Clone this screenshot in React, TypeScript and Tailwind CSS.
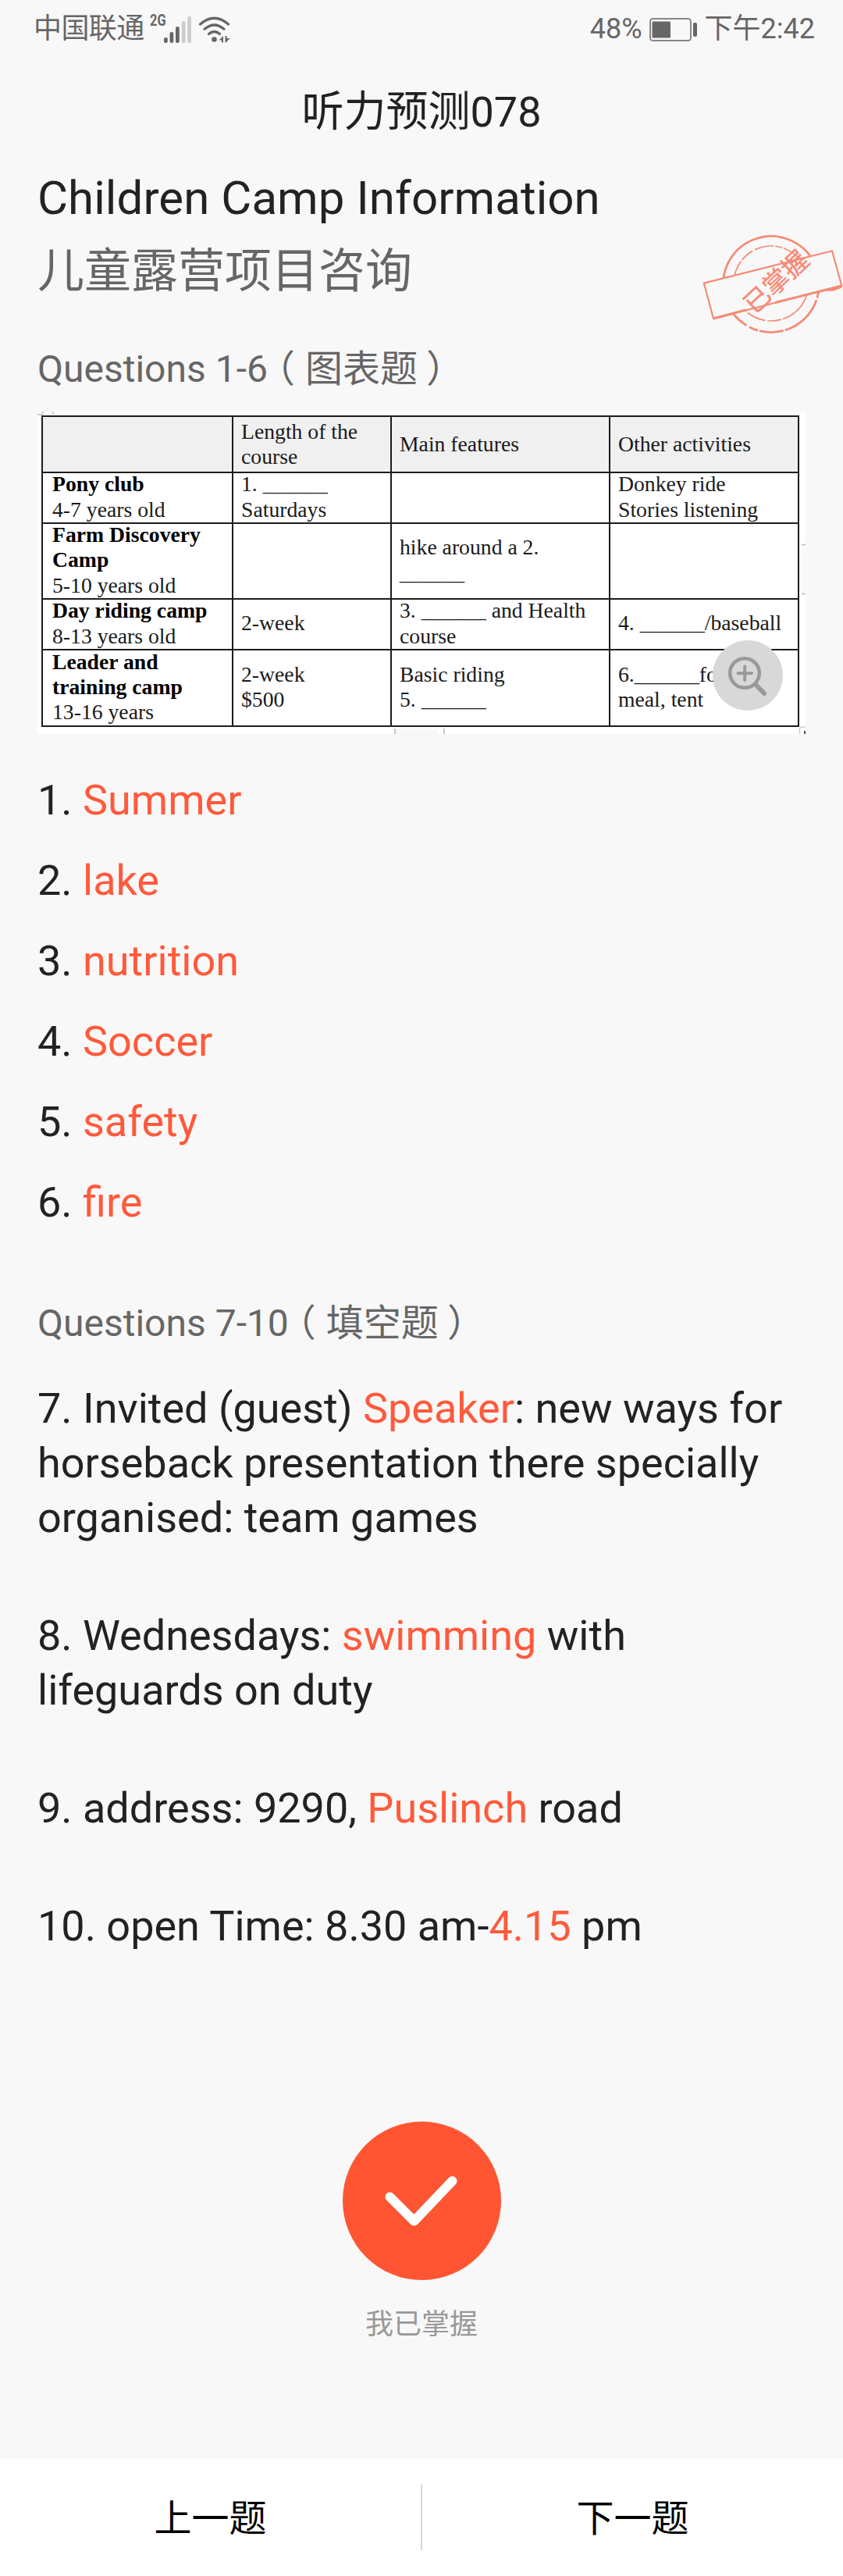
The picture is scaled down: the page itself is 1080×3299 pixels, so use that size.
import type { ReactNode } from 'react';

const SANS = "font-['Roboto','Noto_Sans_CJK_SC',sans-serif]";

const ANSWERS = ['Summer', 'lake', 'nutrition', 'Soccer', 'safety', 'fire'];

const BLANK = '______';

type Row = { name: string[]; age: string; cells: string[][] };

const ROWS: Row[] = [
  {
    name: ['Pony club'],
    age: '4-7 years old',
    cells: [[`1. ${BLANK}`, 'Saturdays'], [], ['Donkey ride', 'Stories listening']],
  },
  {
    name: ['Farm Discovery', 'Camp'],
    age: '5-10 years old',
    cells: [[], ['hike around a 2.', BLANK], []],
  },
  {
    name: ['Day riding camp'],
    age: '8-13 years old',
    cells: [['2-week'], [`3. ${BLANK} and Health`, 'course'], [`4. ${BLANK}/baseball`]],
  },
  {
    name: ['Leader and', 'training camp'],
    age: '13-16 years',
    cells: [['2-week', '$500'], ['Basic riding', `5. ${BLANK}`], [`6.${BLANK}for a`, 'meal, tent']],
  },
];

function SignalIcon() {
  return (
    <svg className="h-[34px] w-[36px]" viewBox="0 0 36 34" aria-hidden="true">
      <rect x="0" y="27" width="4.8" height="7" rx="2.2" fill="#666" />
      <rect x="7.5" y="20" width="4.8" height="14" rx="2.2" fill="#666" />
      <rect x="15" y="13" width="4.8" height="21" rx="2.2" fill="#666" />
      <rect x="22.8" y="6" width="4.8" height="28" rx="2.2" fill="#ccc" />
      <rect x="30.2" y="0" width="4.8" height="34" rx="2.2" fill="#ccc" />
    </svg>
  );
}

function WifiIcon() {
  return (
    <svg className="ml-2 h-[34px] w-[42px]" viewBox="0 0 42 34" aria-hidden="true">
      <g fill="none" stroke="#666" strokeWidth="3.2" strokeLinecap="round">
        <path d="M2.5 10Q20.5 -5.5 38.5 10" />
        <path d="M8 16.2Q20.5 5.8 33 16.2" />
        <path d="M13.5 22.5Q20.5 16.5 27.5 22.5" />
      </g>
      <circle cx="20.5" cy="29.5" r="3.3" fill="#666" />
      <path d="M26.5 30.5L32 25V33.5H30V30.5ZM34.5 25L36.5 25V28L40.5 28L35.5 33.5H34.5Z" fill="#666" />
    </svg>
  );
}

function BatteryIcon() {
  return (
    <svg className="ml-[9px] mr-[10px] h-[30px] w-[61px]" viewBox="0 0 61 30" aria-hidden="true">
      <rect x="1" y="1" width="52" height="28" rx="3.5" fill="none" stroke="#888" strokeWidth="2" />
      <rect x="3.5" y="4.5" width="23.5" height="21" rx="1" fill="#666" />
      <rect x="56" y="6" width="5" height="18" rx="2" fill="#666" />
    </svg>
  );
}

function StatusBar() {
  return (
    <div className="flex h-[75px] items-center pl-[43px] pr-[36px] text-[36px] leading-[75px] text-[#666]">
      <span className="tracking-[-0.6px]">中国联通</span>
      <span className="ml-[7px] mb-[22px] w-[18px] origin-left scale-x-[0.78] text-[21px] font-bold leading-none">2G</span>
      <SignalIcon />
      <WifiIcon />
      <span className="ml-auto">48%</span>
      <BatteryIcon />
      <span>下午2:42</span>
    </div>
  );
}

function Stamp() {
  return (
    <svg
      className="absolute left-[896px] top-[296px] h-[136px] w-[184px]"
      viewBox="36 16 184 136"
      role="img"
      aria-label="已掌握"
    >
      <g fill="none" stroke="#f58b77">
        <circle cx="128" cy="84" r="61.5" strokeWidth="2.8" strokeDasharray="232 3 58 2 31 2 12 4 60" transform="rotate(160 128 84)" />
        <circle cx="128" cy="83" r="48" strokeWidth="1.7" strokeDasharray="60 2 18 3 25 2 9 2" />
        <path d="M41.8 82.6L206 41.3L218.3 86L54 128Z" fill="#f8f8f8" strokeWidth="2.2" />
        <path d="M54 128L95 117M133 107.5L218.3 86M196 91.5L208 91L218.3 87" strokeWidth="3" />
      </g>
      <text
        x="134.5"
        y="81"
        transform="rotate(-43 134.5 81)"
        textAnchor="middle"
        dominantBaseline="central"
        fontSize="33"
        fill="#f58b77"
        stroke="#f58b77"
        strokeWidth="0.4"
      >
        已掌握
      </text>
    </svg>
  );
}

function SectionTitle({ label, kind }: { label: string; kind: string }) {
  return (
    <h3 className="h-[70px] text-[48px] leading-[70px] text-[#666]">
      {label}
      <span className="-ml-[13px] mr-[13px]">（</span>
      {kind}
      <span className="ml-[11px]">）</span>
    </h3>
  );
}

function Cell({ children, head, first }: { children?: ReactNode; head?: boolean; first?: boolean }) {
  return (
    <div
      className={`flex flex-col justify-center whitespace-nowrap ${head ? 'bg-[#f0f0f0]' : 'bg-white pb-[2px]'} ${first ? 'pl-3' : 'pl-2.5'}`}
    >
      {children}
    </div>
  );
}

function CampTable() {
  return (
    <div className="relative mt-[19px] h-[413px] w-[984px] bg-white pl-[5px] pt-[5px]">
      <div className="grid w-[971px] grid-cols-[242px_201px_278px_240px] grid-rows-[70px_63px_95px_63px_96px] gap-[2px] bg-[#1c1c1c] p-[2px] font-['Liberation_Serif',serif] text-[27.7px] leading-[32.3px] text-[#1a1a1a]">
        <Cell head first />
        <Cell head>
          <span>Length of the</span>
          <span>course</span>
        </Cell>
        <Cell head>Main features</Cell>
        <Cell head>Other activities</Cell>
        {ROWS.map((row) => (
          <div key={row.age} className="contents">
            <Cell first>
              {row.name.map((line) => (
                <b key={line} className="font-bold text-black">{line}</b>
              ))}
              <span>{row.age}</span>
            </Cell>
            {row.cells.map((lines, i) => (
              <Cell key={i}>
                {lines.map((line) => (
                  <span key={line}>{line}</span>
                ))}
              </Cell>
            ))}
          </div>
        ))}
      </div>

      {/* page marks left around the scanned sheet */}
      <svg className="absolute inset-0 h-full w-full" viewBox="0 0 984 413" aria-hidden="true">
        <path d="M979 171h5v62h-5ZM459 406h54v7h-54Z" fill="#f8f8f8" />
        <path
          d="M0 4h5q2 0 2-4M20 0v3M979 170.5h5M979 233.5h5M458 406v7M521 406v7"
          fill="none"
          stroke="#bbb"
          strokeWidth="1.6"
        />
        <path d="M976.5 413v-6q0-3 3-3h4.5" fill="none" stroke="#ccc" strokeWidth="1.5" />
        <path d="M983 409v4" stroke="#555" strokeWidth="2" />
      </svg>

      <button
        type="button"
        aria-label="放大图片"
        className="absolute left-[865px] top-[293px] h-[90px] w-[90px] rounded-full bg-[#d8d8d8]"
      >
        <svg className="h-full w-full" viewBox="0 0 90 90" fill="none" stroke="#999" strokeLinecap="round">
          <circle cx="41" cy="42" r="18.8" strokeWidth="4.5" />
          <path d="M32.5 42.2h17.5M41.2 33.5v17.5" strokeWidth="4" />
          <path d="M55.5 57L66 68" strokeWidth="6" />
        </svg>
      </button>
    </div>
  );
}

function Hit({ children }: { children: ReactNode }) {
  return <span className="text-[#ff5a3c]">{children}</span>;
}

export default function App() {
  return (
    <div className={`relative flex h-[3299px] w-[1080px] flex-col overflow-hidden bg-[#f8f8f8] text-[#222] ${SANS}`}>
      <StatusBar />
      <header className="h-[132px] text-center text-[54px] leading-[137px]">听力预测078</header>
      <Stamp />

      <main className="px-12">
        <h1 className="text-[60px] leading-[94px] tracking-[0.06px]">Children Camp Information</h1>
        <h2 className="h-[94px] text-[60px] leading-[94px] text-[#666]">儿童露营项目咨询</h2>

        <div className="mt-[43px]">
          <SectionTitle label="Questions 1-6" kind="图表题" />
        </div>
        <CampTable />

        <ol className="mt-[33px] text-[54px] leading-[103px]">
          {ANSWERS.map((answer, i) => (
            <li key={answer}>
              {i + 1}. <Hit>{answer}</Hit>
            </li>
          ))}
        </ol>

        <div className="mt-[69px]">
          <SectionTitle label="Questions 7-10" kind="填空题" />
        </div>
        <div className="mt-[39px] flex flex-col gap-[81px] text-[54px] leading-[70px]">
          <p>
            7. Invited (guest) <Hit>Speaker</Hit>: new ways for horseback presentation there specially organised: team games
          </p>
          <p>
            8. Wednesdays: <Hit>swimming</Hit> with lifeguards on duty
          </p>
          <p>
            9. address: 9290, <Hit>Puslinch</Hit> road
          </p>
          <p>
            10. open Time: 8.30 am-<Hit>4.15</Hit> pm
          </p>
        </div>
      </main>

      <div className="mt-[215px] flex flex-col items-center">
        <button type="button" aria-label="我已掌握" className="h-[203px] w-[203px] rounded-full bg-[#ff5533]">
          <svg className="h-full w-full" viewBox="0 0 203 203" fill="none" aria-hidden="true">
            <path
              d="M60.5 96.5L91.5 127.5L140.5 76"
              stroke="white"
              strokeWidth="12"
              strokeLinecap="round"
              strokeLinejoin="round"
            />
          </svg>
        </button>
        <span className="mt-[32px] text-[36px] leading-[50px] text-[#999]">我已掌握</span>
      </div>

      <footer className="mt-auto flex h-[150px] items-center bg-white text-[48px] text-black">
        <button type="button" className="flex-1 pt-[3px] text-center">上一题</button>
        <div className="h-[84px] w-[2px] bg-[#d8d8d8]" />
        <button type="button" className="flex-1 pt-[3px] text-center">下一题</button>
      </footer>
    </div>
  );
}
